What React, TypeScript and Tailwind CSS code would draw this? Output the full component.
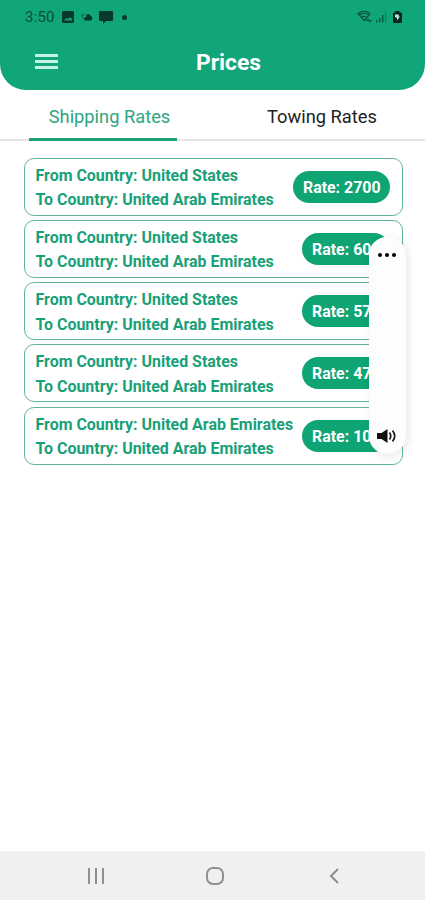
import clsx from 'clsx';

const rates = [
  { from: 'United States', to: 'United Arab Emirates', rate: '2700' },
  { from: 'United States', to: 'United Arab Emirates', rate: '600' },
  { from: 'United States', to: 'United Arab Emirates', rate: '575' },
  { from: 'United States', to: 'United Arab Emirates', rate: '475' },
  { from: 'United Arab Emirates', to: 'United Arab Emirates', rate: '100' },
];

const StatusBar = () => (
  <div className="flex h-[34px] items-center justify-between pl-[25px] pr-[23px] text-[#0a4d38]">
    <div className="flex items-center">
      <span className="w-[31px] text-[15px] leading-none tracking-[0.2px]">3:50</span>
      <svg className="ml-[6px]" width="12" height="12" viewBox="0 0 12 12">
        <path
          fill="#07382a"
          fillRule="evenodd"
          d="M1.5 0h9A1.5 1.5 0 0 1 12 1.5v9a1.5 1.5 0 0 1-1.5 1.5h-9A1.5 1.5 0 0 1 0 10.5v-9A1.5 1.5 0 0 1 1.5 0zM2 9.5h8V8L8 6 6 8 4.5 7z"
        />
      </svg>
      <svg className="ml-[7px]" width="12" height="10" viewBox="0 0 12 10">
        <path fill="none" stroke="#0a4d38" strokeWidth="0.8" d="M1 2v3L3 7M3.5 1.5 2.5 4" />
        <path fill="#07382a" d="M2.5 6.5 5 5l.5-2.500L8 2l3.500 3.500L10.500 8.500H4z" />
      </svg>
      <svg className="ml-[6px]" width="14" height="13" viewBox="0 0 14 13">
        <path fill="#07382a" d="M1 0h12a1 1 0 0 1 1 1v8a1 1 0 0 1-1 1H7l-3 3v-3H1a1 1 0 0 1-1-1V1a1 1 0 0 1 1-1z" />
        <path fill="#0b5a42" d="M3.5 4.5h1v1h-1zM6.5 4.5h1v1h-1zM9.5 4.5h1v1h-1z" />
      </svg>
      <span className="ml-[9px] size-[5px] rounded-full bg-[#07382a]" />
    </div>
    <div className="flex items-center">
      <svg width="16" height="14" viewBox="0 0 16 14">
        <path
          fill="none"
          stroke="#0a4d38"
          strokeWidth="1.2"
          d="M1 3.5Q7 -1 13 3.500L7.500 10.500zM3 4.500Q7 2 11 4.500M5 7Q7 5.500 9 7"
        />
        <path fill="#0a4d38" d="M9 11l2.500-3v2h3.500l-2.500 3v-2z" />
      </svg>
      <svg className="ml-[3px]" width="11" height="12" viewBox="0 0 11 12">
        <path fill="#0a5a41" d="M0 9h1.500v2.500H0zM3 7h1.500v4.500H3zM6 4h1.500v7.500H6z" />
        <path fill="#0d8059" d="M9 1h1.200v10.500H9z" />
      </svg>
      <svg className="ml-[6px]" width="9" height="12" viewBox="0 0 9 12">
        <path fill="#06281e" d="M2.500 0h4v1.500H8a1 1 0 0 1 1 1V11a1 1 0 0 1-1 1H1a1 1 0 0 1-1-1V2.500a1 1 0 0 1 1-1h1.500z" />
        <path fill="#bfeadb" d="M2 3.500h4L5.500 5.500H7L4 9.500V7L2 6z" />
      </svg>
    </div>
  </div>
);

const Header = () => (
  <header className="h-[90px] rounded-b-[26px] bg-[#11a679]">
    <StatusBar />
    <div className="flex h-[54px] items-center pl-[35px]">
      <button className="flex w-[23px] flex-col gap-[3px]" aria-label="Menu">
        <span className="h-[3px] w-full bg-[#c5f3e3]" />
        <span className="h-[3px] w-full bg-[#c5f3e3]" />
        <span className="h-[3px] w-full bg-[#c5f3e3]" />
      </button>
      <h1 className="ml-[138px] pt-[5px] text-[22.8px] font-bold leading-none text-white">Prices</h1>
    </div>
  </header>
);

const Tab = ({ label, active = false }: { label: string; active?: boolean }) => (
  <button
    className={clsx('flex h-[51px] items-center justify-center border-b-[3px] pt-[5px] text-[18.3px]', {
      'ml-[29px] w-[148px] border-[#22a078] pl-[13px] text-[#2ca681]': active,
      'mr-[29px] w-[148px] border-transparent text-[#222222]': !active,
    })}
  >
    {label}
  </button>
);

const RateCard = ({ from, to, rate }: { from: string; to: string; rate: string }) => (
  <div className="flex h-[58px] items-center justify-between rounded-[10px] border border-[#5fb69a] pl-[10.5px] pr-3">
    <div className="whitespace-nowrap pt-[3px] text-[15.95px] font-bold leading-[24.4px] text-[#18a077]">
      <p>From Country: {from}</p>
      <p>To Country: {to}</p>
    </div>
    <div className="flex h-8 shrink-0 items-center rounded-full bg-[#0fa473] pl-[10px] pr-[9.500px] pt-[2px] text-[15.9px] font-bold text-white">
      Rate: {rate}
    </div>
  </div>
);

const SoundPanel = () => (
  <div className="absolute left-[369px] top-[237px] flex h-[217px] w-[37px] flex-col items-center justify-between rounded-[18px] bg-[#fdfdfd] pb-[10px] pr-[1px] pt-4 shadow-[2px_2px_8px_rgba(0,0,0,0.10)]">
    <div className="flex gap-[3px]">
      <span className="size-1 rounded-full bg-black" />
      <span className="size-1 rounded-full bg-black" />
      <span className="size-1 rounded-full bg-black" />
    </div>
    <svg width="20" height="16" viewBox="0 0 20 16">
      <path fill="#111111" d="M0 5h4.500L10.500 1v14l-6-4H0z" />
      <path
        fill="none"
        stroke="#111111"
        strokeWidth="1.600"
        d="M12.500 4.500q2.500 3.500 0 7M15.500 2.500q4.500 5.500 0 11"
      />
    </svg>
  </div>
);

const NavigationBar = () => (
  <nav className="flex h-[49px] items-center bg-[#f0f0f0]">
    <svg className="ml-[87px]" width="18" height="16" viewBox="0 0 18 16">
      <path stroke="#8e8e8e" strokeWidth="2" d="M2 0v16M9 0v16M16 0v16" />
    </svg>
    <svg className="ml-[101px]" width="18" height="18" viewBox="0 0 18 18">
      <rect x="1" y="1" width="16" height="16" rx="6" fill="none" stroke="#909090" strokeWidth="2" />
    </svg>
    <svg className="ml-[105px]" width="10" height="16" viewBox="0 0 10 16">
      <path fill="none" stroke="#8e8e8e" strokeWidth="2" d="M9 1 2 8l7 7" />
    </svg>
  </nav>
);

export default function App() {
  return (
    <div className="relative flex h-[900px] w-[425px] flex-col overflow-hidden bg-white font-['Roboto',sans-serif]">
      <Header />
      <div className="flex h-[51px] justify-between shadow-[inset_0_-2px_0_#e6e6e6]">
        <Tab label="Shipping Rates" active />
        <Tab label="Towing Rates" />
      </div>
      <main className="flex flex-1 flex-col gap-[4.3px] pl-6 pr-[22px] pt-[16.5px]">
        {rates.map((item) => (
          <RateCard key={item.rate} {...item} />
        ))}
      </main>
      <SoundPanel />
      <NavigationBar />
    </div>
  );
}
